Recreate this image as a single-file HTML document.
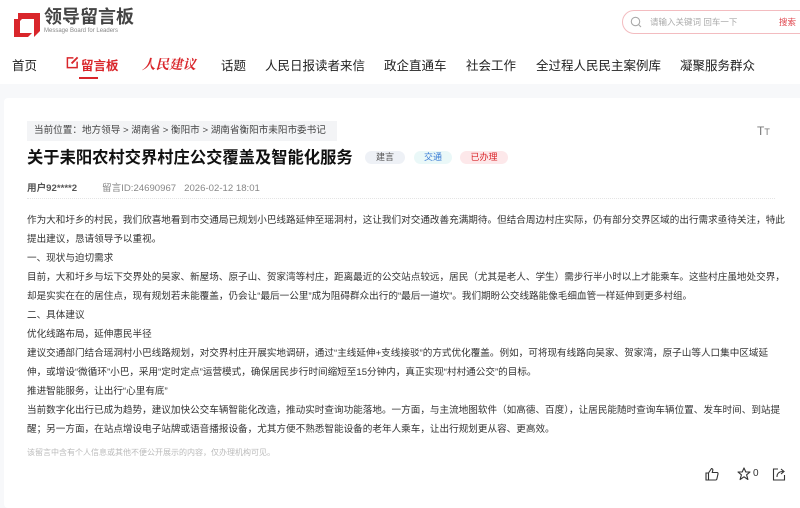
<!DOCTYPE html>
<html><head><meta charset="utf-8"><style>
*{margin:0;padding:0;box-sizing:border-box}
body{width:800px;height:504px;overflow:hidden;background:#f7f8fa;font-family:"Liberation Sans","Noto Sans CJK SC",sans-serif;color:#333;position:relative}
.hdr{position:absolute;left:0;top:0;width:800px;height:84px;background:#fff}
.abs{position:absolute;white-space:nowrap}
.nav{top:55px;font-size:12.5px;color:#222}
.card{position:absolute;left:4px;top:98px;width:800px;height:410px;background:#fff;border-radius:4px}
.p{position:absolute;left:27px;font-size:9.6px;color:#333;white-space:nowrap;line-height:19px}
.tag{position:absolute;top:151px;height:13px;line-height:13px;font-size:9px;border-radius:7px;text-align:center}
</style></head><body>
<div class="hdr"></div>
<svg class="abs" style="left:12px;top:11px" width="30" height="26" viewBox="0 0 30 26"><path d="M6 2H28V20L22 26V8H10L6 12Z" fill="#d9262b"/><path d="M2 8H8V22H20L16 26H2Z" fill="#d9262b"/></svg>
<div class="abs" style="left:44px;top:6px;font-size:18px;line-height:22px;font-weight:bold;color:#444">领导留言板</div>
<div class="abs" style="left:44px;top:28px;font-size:6px;color:#888">Message Board for Leaders</div>
<div class="abs" style="left:622px;top:10px;width:190px;height:24px;border:1px solid #f3bcc0;border-radius:12px"></div>
<svg class="abs" style="left:630px;top:16px" width="12" height="12" viewBox="0 0 12 12"><circle cx="5.5" cy="5.5" r="4.2" fill="none" stroke="#aaa" stroke-width="1.1"/><path d="M8.6 8.6L11 11" stroke="#aaa" stroke-width="1.1"/></svg>
<div class="abs" style="left:650px;top:16px;font-size:8.5px;color:#aaa">请输入关键词 回车一下</div>
<div class="abs" style="left:779px;top:16px;font-size:8.5px;color:#e0454d">搜索</div>
<div class="abs nav" style="left:12px">首页</div>
<svg class="abs" style="left:66px;top:56px" width="13" height="13" viewBox="0 0 14 14"><path d="M8 2H1.5V12.5H12V6" fill="none" stroke="#d9262b" stroke-width="1.6"/><path d="M6 8L12.5 1.5" stroke="#d9262b" stroke-width="2"/></svg>
<div class="abs nav" style="left:81px;color:#d9262b;font-weight:bold">留言板</div>
<div class="abs" style="left:79px;top:77px;width:19px;height:2px;background:#d9262b"></div>
<div class="abs nav" style="left:142px;top:53px;color:#d9262b;font-weight:bold;font-style:italic;font-size:13.5px;font-family:'Noto Serif CJK SC',serif">人民建议</div>
<div class="abs nav" style="left:221px">话题</div>
<div class="abs nav" style="left:265px">人民日报读者来信</div>
<div class="abs nav" style="left:384px">政企直通车</div>
<div class="abs nav" style="left:466px">社会工作</div>
<div class="abs nav" style="left:536px">全过程人民民主案例库</div>
<div class="abs nav" style="left:680px">凝聚服务群众</div>
<div class="card"></div>
<div class="abs" style="left:27px;top:121px;width:310px;height:20px;background:#f3f4f6;font-size:9.6px;line-height:20px;padding-left:7px;color:#444">当前位置：地方领导 &gt; 湖南省 &gt; 衡阳市 &gt; 湖南省衡阳市耒阳市委书记</div>
<div class="abs" style="left:757px;top:124px;font-size:12px;color:#777">T<span style="font-size:9px">T</span></div>
<div class="abs" style="left:27px;top:147px;font-size:16.3px;line-height:22px;font-weight:bold;color:#111">关于耒阳农村交界村庄公交覆盖及智能化服务</div>
<div class="tag" style="left:365px;width:40px;background:#eef1f6;color:#555">建言</div>
<div class="tag" style="left:414px;width:38px;background:#eaf8f8;color:#3a7bd5">交通</div>
<div class="tag" style="left:460px;width:48px;background:#fde8ea;color:#d9262b">已办理</div>
<div class="abs" style="left:27px;top:180px;font-size:9.6px;color:#555;font-weight:bold">用户92****2</div>
<div class="abs" style="left:102px;top:180px;font-size:9.6px;color:#888">留言ID:24690967&nbsp;&nbsp;&nbsp;2026-02-12 18:01</div>
<div class="abs" style="left:27px;top:198px;width:748px;border-top:1px dotted #e4e4e4"></div>
<div class="p" style="top:211px">作为大和圩乡的村民，我们欣喜地看到市交通局已规划小巴线路延伸至瑶洞村，这让我们对交通改善充满期待。但结合周边村庄实际，仍有部分交界区域的出行需求亟待关注，特此</div>
<div class="p" style="top:230px">提出建议，恳请领导予以重视。</div>
<div class="p" style="top:249px">一、现状与迫切需求</div>
<div class="p" style="top:268px">目前，大和圩乡与坛下交界处的吴家、新屋场、原子山、贺家湾等村庄，距离最近的公交站点较远，居民（尤其是老人、学生）需步行半小时以上才能乘车。这些村庄虽地处交界，</div>
<div class="p" style="top:287px">却是实实在在的居住点，现有规划若未能覆盖，仍会让“最后一公里”成为阻碍群众出行的“最后一道坎”。我们期盼公交线路能像毛细血管一样延伸到更多村组。</div>
<div class="p" style="top:306px">二、具体建议</div>
<div class="p" style="top:325px">优化线路布局，延伸惠民半径</div>
<div class="p" style="top:344px">建议交通部门结合瑶洞村小巴线路规划，对交界村庄开展实地调研，通过“主线延伸+支线接驳”的方式优化覆盖。例如，可将现有线路向吴家、贺家湾，原子山等人口集中区域延</div>
<div class="p" style="top:363px">伸，或增设“微循环”小巴，采用“定时定点”运营模式，确保居民步行时间缩短至15分钟内，真正实现“村村通公交”的目标。</div>
<div class="p" style="top:382px">推进智能服务，让出行“心里有底”</div>
<div class="p" style="top:401px">当前数字化出行已成为趋势，建议加快公交车辆智能化改造，推动实时查询功能落地。一方面，与主流地图软件（如高德、百度），让居民能随时查询车辆位置、发车时间、到站提</div>
<div class="p" style="top:420px">醒；另一方面，在站点增设电子站牌或语音播报设备，尤其方便不熟悉智能设备的老年人乘车，让出行规划更从容、更高效。</div>
<div class="p" style="top:443px;font-size:8px;color:#bbb">该留言中含有个人信息或其他不便公开展示的内容，仅办理机构可见。</div>
<svg class="abs" style="left:705px;top:467px" width="14" height="14" viewBox="0 0 14 14"><path d="M1 6H3.5V13H1Z M3.5 6L6.5 1.5C7.5 1.5 8 2.3 7.8 3.3L7.3 5.5H12C12.8 5.5 13.2 6.2 13 7L11.8 12.2C11.6 12.8 11.2 13 10.6 13H3.5" fill="none" stroke="#333" stroke-width="1.1"/></svg>
<svg class="abs" style="left:737px;top:467px" width="14" height="14" viewBox="0 0 14 14"><path d="M7 1L8.8 5H13L9.6 7.8L10.9 12.5L7 9.8L3.1 12.5L4.4 7.8L1 5H5.2Z" fill="none" stroke="#333" stroke-width="1.1" stroke-linejoin="round"/></svg>
<div class="abs" style="left:753px;top:468px;font-size:10px;color:#333">0</div>
<svg class="abs" style="left:772px;top:467px" width="14" height="14" viewBox="0 0 14 14"><path d="M6 2H1.5V13H12.5V8" fill="none" stroke="#333" stroke-width="1.1"/><path d="M5 10C5 6 7.5 4.5 11 4.5M9 2L12 4.5L9 7" fill="none" stroke="#333" stroke-width="1.1"/></svg>
</body></html>
